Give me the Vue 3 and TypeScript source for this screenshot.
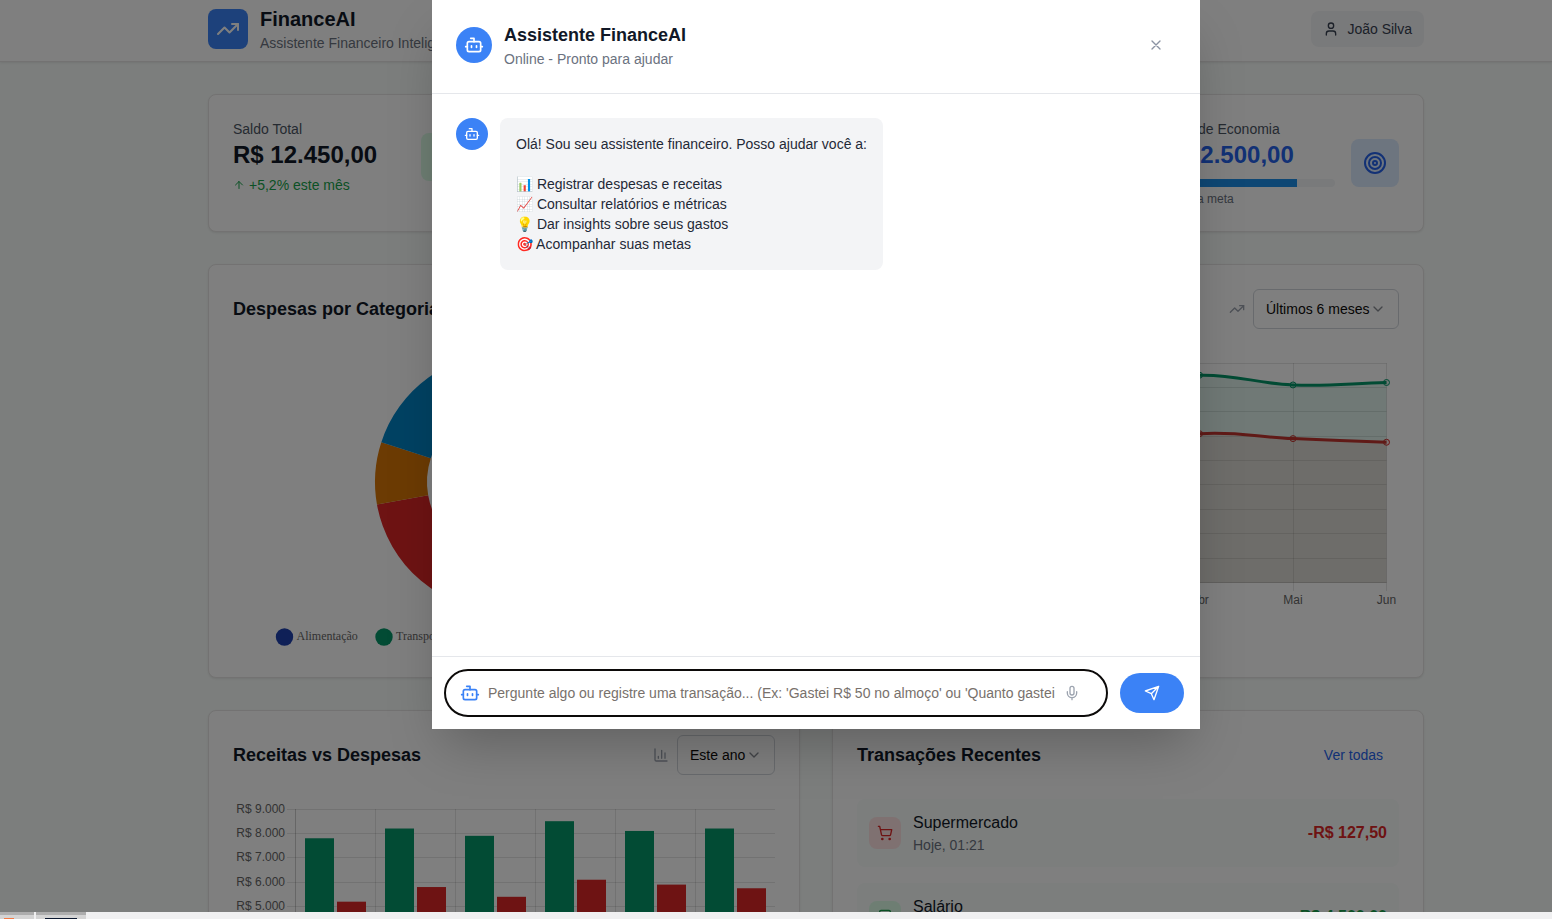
<script setup lang="ts">
import { ref } from 'vue'

interface Point { x: number; y: number }
interface Slice { color: string; from: number; to: number }

const months = ['Jan', 'Fev', 'Mar', 'Abr', 'Mai', 'Jun']
const income = [7800, 8200, 7900, 8500, 8100, 8200]
const expenses = [5200, 5800, 5400, 6100, 5900, 5750]
const ticks = [9, 8, 7, 6, 5, 4, 3, 2, 1, 0]

const plotTop = 10
const plotBottom = 229.5
const yOf = (value: number): number => plotBottom - (value / 9000) * (plotBottom - plotTop)
const gridY = (tick: number): number => Math.floor(yOf(tick * 1000)) + 0.5
const tickLabel = (tick: number): string => (tick ? `R$ ${tick}.000` : 'R$ 0')

const lineX = (i: number): number => 62 + i * 93.5
const barX = (i: number): number => 62.5 + i * 80

const toPoints = (values: number[]): Point[] => values.map((v, i) => ({ x: lineX(i), y: yOf(v) }))

// Cardinal-style spline with tension 0.4
function spline(points: Point[]): string {
  const tension = 0.4
  const controls = points.map((cur, i) => {
    const prev = points[i - 1] ?? cur
    const next = points[i + 1] ?? cur
    const d01 = Math.hypot(cur.x - prev.x, cur.y - prev.y)
    const d12 = Math.hypot(next.x - cur.x, next.y - cur.y)
    const a = (tension * d01) / (d01 + d12)
    const b = (tension * d12) / (d01 + d12)
    const dx = next.x - prev.x
    const dy = next.y - prev.y
    return { before: { x: cur.x - a * dx, y: cur.y - a * dy }, after: { x: cur.x + b * dx, y: cur.y + b * dy } }
  })
  return points.reduce((path, p, i) => {
    if (i === 0) return `M${p.x} ${p.y}`
    const c1 = controls[i - 1].after
    const c2 = controls[i].before
    return `${path} C${c1.x} ${c1.y} ${c2.x} ${c2.y} ${p.x} ${p.y}`
  }, '')
}

const series = [
  { name: 'expenses', color: '#dc2626', points: toPoints(expenses) },
  { name: 'income', color: '#059669', points: toPoints(income) },
].map((s) => {
  const line = spline(s.points)
  return { ...s, line, area: `${line} L${lineX(5)} ${plotBottom} L${lineX(0)} ${plotBottom} Z` }
})

const slices: Slice[] = [
  { color: '#1e40af', from: 0, to: 100 },
  { color: '#059669', from: 100, to: 180 },
  { color: '#dc2626', from: 180, to: 260 },
  { color: '#d97706', from: 260, to: 288 },
  { color: '#0284c7', from: 288, to: 360 },
]

function ring(slice: Slice): string {
  const at = (deg: number, r: number): string => {
    const rad = ((deg - 90) * Math.PI) / 180
    return `${271 + r * Math.cos(rad)} ${129 + r * Math.sin(rad)}`
  }
  return `M${at(slice.from, 129)} A129 129 0 0 1 ${at(slice.to, 129)} L${at(slice.to, 77)} A77 77 0 0 0 ${at(slice.from, 77)} Z`
}

const transactions = [
  { name: 'Supermercado', date: 'Hoje, 01:21', amount: '-R$ 127,50', kind: 'out' },
  { name: 'Salário', date: 'Ontem', amount: '+R$ 4.500,00', kind: 'in' },
]

const savings = 78
const message = ref('')
const greeting = `Olá! Sou seu assistente financeiro. Posso ajudar você a:

📊 Registrar despesas e receitas
📈 Consultar relatórios e métricas
💡 Dar insights sobre seus gastos
🎯 Acompanhar suas metas`
</script>

<template>
  <div class="app">
    <svg class="symbols" aria-hidden="true">
      <symbol id="bot" viewBox="0 0 24 24">
        <path d="M12 8V4H8" /><rect width="16" height="12" x="4" y="8" rx="2" />
        <path d="M2 14h2M20 14h2M15 13v2M9 13v2" />
      </symbol>
      <symbol id="trend" viewBox="0 0 24 24">
        <path d="M22 7 13.5 15.5 8.5 10.5 2 17" /><path d="M16 7h6v6" />
      </symbol>
      <symbol id="chevron" viewBox="0 0 24 24"><path d="m6 9 6 6 6-6" /></symbol>
    </svg>

    <div class="page">
      <header class="topbar">
        <div class="brand">
          <span class="logo"><svg class="icon i24"><use href="#trend" /></svg></span>
          <div>
            <h1>FinanceAI</h1>
            <p>Assistente Financeiro Inteligente</p>
          </div>
        </div>
        <button class="user" type="button">
          <svg class="icon i16" viewBox="0 0 24 24"><path d="M19 21v-2a4 4 0 0 0-4-4H9a4 4 0 0 0-4 4v2" /><circle cx="12" cy="7" r="4" /></svg>
          João Silva
        </button>
      </header>

      <main>
        <section class="stats">
          <article class="card stat">
            <div class="figures">
              <p class="label">Saldo Total</p>
              <p class="value">R$ 12.450,00</p>
              <p class="growth">
                <svg class="icon i12" viewBox="0 0 24 24"><path d="m5 12 7-7 7 7M12 19V5" /></svg>
                +5,2% este mês
              </p>
            </div>
            <span class="tile green"></span>
          </article>
          <article class="card stat goal">
            <div class="figures">
              <p class="label">Meta de Economia</p>
              <p class="value blue-text">R$ 2.500,00</p>
              <div class="track" role="progressbar" :aria-valuenow="savings"><div class="fill" :style="{ width: savings + '%' }"></div></div>
              <p class="hint">{{ savings }}% da meta</p>
            </div>
            <span class="tile blue">
              <svg class="icon i24" viewBox="0 0 24 24"><circle cx="12" cy="12" r="10" /><circle cx="12" cy="12" r="6" /><circle cx="12" cy="12" r="2" /></svg>
            </span>
          </article>
        </section>

        <section class="panels">
          <article class="card">
            <div class="card-head"><h2>Despesas por Categoria</h2></div>
            <svg class="chart" viewBox="0 0 542 300">
              <path v-for="s in slices" :key="s.color" :d="ring(s)" :fill="s.color" />
              <g class="legend">
                <circle cx="51.5" cy="284" r="8.7" fill="#1e40af" /><text x="63.5" y="287">Alimentação</text>
                <circle cx="151" cy="284" r="8.7" fill="#059669" /><text x="163" y="287">Transporte</text>
              </g>
            </svg>
          </article>

          <article class="card">
            <div class="card-head end">
              <svg class="icon i16 muted"><use href="#trend" /></svg>
              <label class="picker">
                <select aria-label="Período"><option>Últimos 6 meses</option></select>
                <svg class="icon i16"><use href="#chevron" /></svg>
              </label>
            </div>
            <svg class="chart" viewBox="0 0 542 300">
              <g class="grid">
                <path v-for="t in ticks" :key="t" :d="`M54 ${gridY(t)}H529.5`" />
                <path v-for="(m, i) in months" :key="m" :d="`M${Math.floor(lineX(i)) + 0.5} 10V238`" />
                <path :d="`M62 ${gridY(0)}H529.5`" />
              </g>
              <g v-for="s in series" :key="s.name" :stroke="s.color" :fill="s.color">
                <path :d="s.area" fill-opacity="0.125" stroke="none" />
                <path :d="s.line" fill="none" stroke-width="3" />
                <circle v-for="p in s.points" :key="p.x" :cx="p.x" :cy="p.y" r="3" fill-opacity="0.125" />
              </g>
              <g class="axis">
                <text v-for="t in ticks" :key="t" x="52" :y="gridY(t) + 3.5" text-anchor="end">{{ tickLabel(t) }}</text>
                <text v-for="(m, i) in months" :key="m" :x="lineX(i)" y="251" text-anchor="middle">{{ m }}</text>
              </g>
            </svg>
          </article>

          <article class="card">
            <div class="card-head">
              <h2>Receitas vs Despesas</h2>
              <div class="tools">
                <svg class="icon i16 muted" viewBox="0 0 24 24"><path d="M3 3v16a2 2 0 0 0 2 2h16M18 17V9M13 17V5M8 17v-3" /></svg>
                <label class="picker">
                  <select aria-label="Ano"><option>Este ano</option></select>
                  <svg class="icon i16"><use href="#chevron" /></svg>
                </label>
              </div>
            </div>
            <svg class="chart" viewBox="0 0 542 300">
              <g class="grid">
                <path v-for="t in ticks" :key="t" :d="`M54 ${gridY(t)}H542`" />
                <path v-for="(m, i) in months" :key="m" :d="`M${barX(i)} 10V238`" />
                <path d="M62.5 10V230" />
              </g>
              <g v-for="(m, i) in months" :key="m">
                <rect :x="barX(i) + 9.5" :y="yOf(income[i])" width="29" :height="plotBottom - yOf(income[i])" fill="#059669" />
                <rect :x="barX(i) + 41.5" :y="yOf(expenses[i])" width="29" :height="plotBottom - yOf(expenses[i])" fill="#dc2626" />
              </g>
              <g class="axis">
                <text v-for="t in ticks" :key="t" x="52" :y="gridY(t) + 3.5" text-anchor="end">{{ tickLabel(t) }}</text>
                <text v-for="(m, i) in months" :key="m" :x="barX(i) + 40" y="251" text-anchor="middle">{{ m }}</text>
              </g>
            </svg>
          </article>

          <article class="card">
            <div class="card-head">
              <h2>Transações Recentes</h2>
              <a class="all" href="#transacoes">Ver todas</a>
            </div>
            <ul class="transactions">
              <li v-for="t in transactions" :key="t.name" :class="t.kind">
                <span class="badge">
                  <svg v-if="t.kind === 'out'" class="icon i16" viewBox="0 0 24 24"><circle cx="8" cy="21" r="1" /><circle cx="19" cy="21" r="1" /><path d="M2.05 2.05h2l2.66 12.42a2 2 0 0 0 2 1.58h9.78a2 2 0 0 0 1.95-1.57l1.65-7.43H5.12" /></svg>
                  <svg v-else class="icon i16" viewBox="0 0 24 24"><rect x="4" y="2" width="16" height="20" rx="2" /><path d="M9 22v-4h6v4M8 6h.01M16 6h.01M12 6h.01M12 10h.01M12 14h.01M16 10h.01M16 14h.01M8 10h.01M8 14h.01" /></svg>
                </span>
                <div class="detail">
                  <p class="name">{{ t.name }}</p>
                  <p class="date">{{ t.date }}</p>
                </div>
                <strong>{{ t.amount }}</strong>
              </li>
            </ul>
          </article>
        </section>
      </main>
    </div>

    <div class="overlay">
      <section class="dialog" role="dialog" aria-labelledby="dialog-title">
        <header class="dialog-head">
          <span class="avatar large"><svg class="icon i20"><use href="#bot" /></svg></span>
          <div class="dialog-title">
            <h2 id="dialog-title">Assistente FinanceAI</h2>
            <p>Online - Pronto para ajudar</p>
          </div>
          <button class="close" type="button" aria-label="Fechar">
            <svg class="icon i16" viewBox="0 0 24 24"><path d="M18 6 6 18M6 6l12 12" /></svg>
          </button>
        </header>
        <div class="messages">
          <span class="avatar"><svg class="icon i16"><use href="#bot" /></svg></span>
          <p class="bubble">{{ greeting }}</p>
        </div>
        <form class="composer" @submit.prevent="message = ''">
          <div class="field">
            <svg class="icon i20"><use href="#bot" /></svg>
            <input v-model="message" type="text" aria-label="Mensagem" placeholder="Pergunte algo ou registre uma transação... (Ex: 'Gastei R$ 50 no almoço' ou 'Quanto gastei" />
            <button class="mic" type="button" aria-label="Gravar áudio">
              <svg class="icon i16" viewBox="0 0 24 24"><path d="M12 2a3 3 0 0 0-3 3v7a3 3 0 0 0 6 0V5a3 3 0 0 0-3-3Z" /><path d="M19 10v2a7 7 0 0 1-14 0v-2M12 19v3" /></svg>
            </button>
          </div>
          <button class="send" type="submit" aria-label="Enviar">
            <svg class="icon i16" viewBox="0 0 24 24"><path d="m22 2-7 20-4-9-9-4ZM22 2 11 13" /></svg>
          </button>
        </form>
      </section>
    </div>

    <footer class="taskbar">
      <span class="task first"><i class="orange"></i></span>
      <span class="task"><i class="navy"></i></span>
    </footer>
  </div>
</template>

<style>
body {
  margin: 0;
  overflow: hidden;
}
</style>

<style scoped>
.app {
  position: relative;
  display: flex;
  flex-direction: column;
  height: 100vh;
  overflow: hidden;
  background: #f8fcfa;
  color: #111827;
  font: 14px/20px "Liberation Sans", Arial, sans-serif;
}
.app *, .app *::before { box-sizing: border-box; }
h1, h2, p, ul { margin: 0; padding: 0; }
button, input, select { font: inherit; }
button { border: 0; cursor: pointer; }
.symbols { position: absolute; width: 0; height: 0; }
.icon {
  display: block;
  flex: none;
  fill: none;
  stroke: currentColor;
  stroke-width: 2;
  stroke-linecap: round;
  stroke-linejoin: round;
}
.i12 { width: 12px; height: 12px; }
.i16 { width: 16px; height: 16px; }
.i20 { width: 20px; height: 20px; }
.i24 { width: 24px; height: 24px; }
.muted { color: #9ca3af; }

.page { flex: 1; min-height: 0; overflow: hidden; }
.topbar {
  display: flex;
  align-items: center;
  justify-content: space-between;
  padding: 5px 128px 8px 208px;
  background: #fff;
  border-bottom: 1px solid #e7e5e4;
  box-shadow: 0 1px 2px rgba(0, 0, 0, 0.08);
}
.brand { display: flex; align-items: center; gap: 12px; }
.brand h1 { font-size: 20px; line-height: 28px; }
.brand p { color: #6b7280; }
.logo {
  display: grid;
  place-items: center;
  width: 40px;
  height: 40px;
  border-radius: 8px;
  background: #3b82f6;
  color: #fff;
}
.user {
  display: flex;
  align-items: center;
  gap: 8px;
  padding: 8px 12px;
  border-radius: 8px;
  background: #f3f4f6;
  color: #374151;
}

main { padding: 32px 128px 32px 208px; }
.card {
  padding: 24px;
  background: #fff;
  border: 1px solid #e7e5e4;
  border-radius: 8px;
  box-shadow: 0 1px 2px rgba(0, 0, 0, 0.08);
}
.stats {
  display: grid;
  grid-template-columns: repeat(4, 1fr);
  gap: 24px;
  margin-bottom: 32px;
}
.stat { display: flex; align-items: flex-start; justify-content: space-between; gap: 16px; }
.stat .tile { margin-top: 14px; }
.goal { grid-column: 4; }
.goal .figures { flex: 1; }
.stat.goal .tile { margin-top: 20px; }
.label { color: #4b5563; }
.value { font-size: 24px; line-height: 32px; font-weight: 700; white-space: nowrap; }
.blue-text { color: #2563eb; }
.growth { display: flex; align-items: center; gap: 4px; margin-top: 4px; color: #16a34a; }
.tile { display: grid; place-items: center; flex: none; width: 48px; height: 48px; border-radius: 8px; }
.tile.green { background: #dcfce7; }
.tile.blue { background: #dbeafe; color: #2563eb; }
.track { height: 8px; margin-top: 8px; border-radius: 4px; background: #f3f4f6; overflow: hidden; }
.fill { height: 100%; background: #1d8fe8; }
.hint { margin-top: 4px; font-size: 12px; line-height: 16px; color: #6b7280; }

.panels { display: grid; grid-template-columns: 1fr 1fr; gap: 32px; }
.card-head {
  display: flex;
  align-items: center;
  justify-content: space-between;
  min-height: 40px;
  margin-bottom: 24px;
}
.card-head.end { justify-content: flex-end; gap: 8px; }
.card-head h2 { font-size: 18px; line-height: 28px; }
.tools { display: flex; align-items: center; gap: 8px; }
.picker { position: relative; display: block; }
.picker select {
  display: block;
  height: 40px;
  padding: 0 28px 0 12px;
  appearance: none;
  border: 1px solid #d1d5db;
  border-radius: 6px;
  background: #fff;
  color: #0c0a09;
}
.picker .icon { position: absolute; right: 13px; top: 12px; opacity: 0.5; pointer-events: none; }
.chart { display: block; width: 100%; height: auto; }
.grid path { fill: none; stroke: rgba(0, 0, 0, 0.1); }
.axis text { font: 12px "Liberation Sans", Arial, sans-serif; fill: #666; }
.legend text { font: 12px "Liberation Serif", "Times New Roman", serif; fill: #666; }
.all { padding: 10px 16px; color: #2563eb; text-decoration: none; }

.transactions { display: grid; gap: 16px; list-style: none; }
.transactions li {
  display: flex;
  align-items: center;
  gap: 12px;
  padding: 12px;
  border-radius: 8px;
  background: #f8fcfa;
}
.badge { display: grid; place-items: center; width: 32px; height: 32px; border-radius: 8px; }
.detail { flex: 1; }
.name { font-size: 16px; line-height: 24px; }
.date { color: #6b7280; }
.transactions strong { font-size: 16px; line-height: 24px; }
.out .badge { background: #fee2e2; color: #dc2626; }
.in .badge { background: #dcfce7; color: #16a34a; }
.out strong { color: #dc2626; }
.in strong { color: #16a34a; }

.overlay {
  position: absolute;
  inset: 0 0 7px;
  display: flex;
  justify-content: center;
  padding: 0 0 183px 80px;
  background: rgba(0, 0, 0, 0.5);
  overflow: hidden;
}
.dialog {
  display: flex;
  flex-direction: column;
  width: 100%;
  max-width: 768px;
  background: #fff;
  box-shadow: 0 25px 50px -12px rgba(0, 0, 0, 0.25);
}
.dialog-head {
  display: flex;
  align-items: center;
  gap: 12px;
  padding: 21px 24px 24px;
  border-bottom: 1px solid #e5e7eb;
}
.dialog-title { flex: 1; }
.dialog-title h2 { font-size: 18px; line-height: 28px; }
.dialog-title p { color: #6b7280; }
.avatar {
  display: grid;
  place-items: center;
  flex: none;
  width: 32px;
  height: 32px;
  border-radius: 50%;
  background: #3b82f6;
  color: #fff;
}
.avatar.large { width: 36px; height: 36px; }
.close { padding: 12px; background: none; color: #8b93a3; }
.messages { display: flex; flex: 1; align-items: flex-start; gap: 12px; min-height: 0; padding: 24px; }
.bubble {
  padding: 16px;
  border-radius: 8px;
  background: #f3f4f6;
  color: #1f2937;
  white-space: pre-line;
}
.composer {
  display: flex;
  align-items: center;
  gap: 12px;
  padding: 12px 16px 12px 12px;
  border-top: 1px solid #e5e7eb;
}
.field {
  display: flex;
  flex: 1;
  align-items: center;
  gap: 8px;
  min-width: 0;
  height: 48px;
  padding: 0 26px 0 14px;
  border: 2px solid #0c0a09;
  border-radius: 24px;
  color: #3b82f6;
}
.field input {
  flex: 1;
  min-width: 0;
  height: 40px;
  padding: 0;
  border: 0;
  outline: 0;
  background: none;
  color: #111827;
}
.field input::placeholder { color: #78716c; opacity: 1; }
.mic { padding: 0; background: none; color: #9ca3af; }
.send {
  display: grid;
  place-items: center;
  width: 64px;
  height: 40px;
  padding: 0;
  border-radius: 20px;
  background: #3b82f6;
  color: #fff;
}

.taskbar { display: flex; gap: 2px; flex: none; height: 7px; background: #f0f0f1; }
.task {
  display: flex;
  justify-content: center;
  align-items: flex-end;
  width: 50px;
  border-top: 3px solid #adadad;
  background: #d4d4d4;
}
.task.first { width: 34px; justify-content: flex-start; padding-left: 4px; }
.orange { width: 10px; height: 1px; background: #f47a45; }
.navy { width: 32px; height: 1px; background: #0b1830; }
</style>
